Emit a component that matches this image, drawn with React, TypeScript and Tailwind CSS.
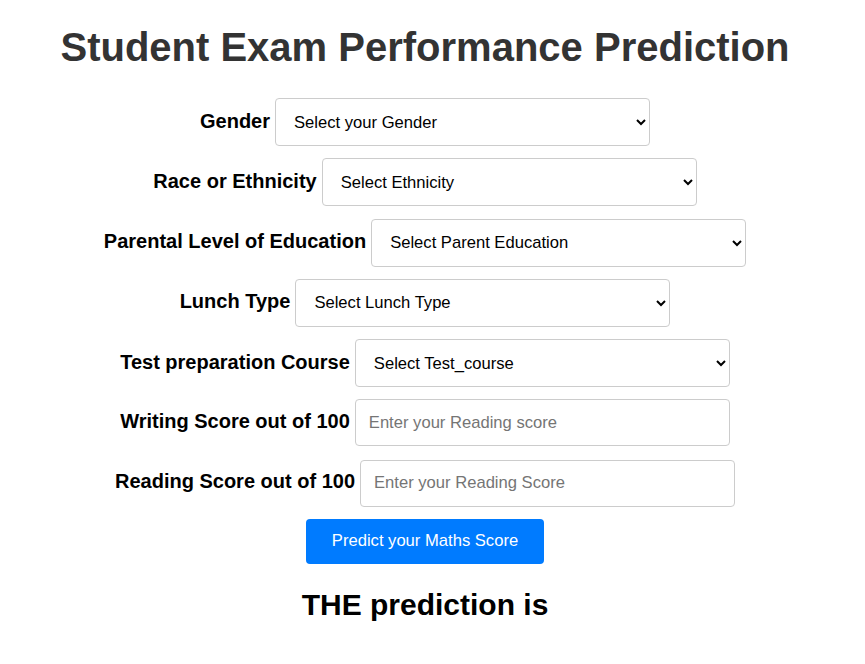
import React from "react";

const font = { fontFamily: '"Liberation Sans", Arial, sans-serif' };

function Row({ label, children }: { label: string; children: React.ReactNode }) {
  return (
    <div className="flex items-baseline justify-center gap-[5px] h-[60.3px]">
      <label className="text-[20px] font-bold text-black">{label}</label>
      {children}
    </div>
  );
}

function Sel({ text }: { text: string }) {
  return (
    <select className="w-[375px] h-[48px] border border-[#ccc] rounded-[4px] pl-[14px] pr-[6px] text-[16.6px] text-black bg-white" defaultValue="">
      <option value="" disabled>{text}</option>
    </select>
  );
}

function Inp({ text }: { text: string }) {
  return (
    <input
      className="w-[375px] h-[47px] border border-[#ccc] rounded-[4px] px-[13px] text-[16.6px] text-black bg-white placeholder:text-[#757575]"
      placeholder={text}
    />
  );
}

export default function App() {
  return (
    <div className="w-[850px] bg-white min-h-[664px]" style={font}>
      <h1 className="text-center text-[40px] font-bold text-[#333] pt-[23px] leading-[48px] mb-[27px]">
        Student Exam Performance Prediction
      </h1>
      <div className="flex flex-col">
        <Row label="Gender"><Sel text="Select your Gender" /></Row>
        <Row label="Race or Ethnicity"><Sel text="Select Ethnicity" /></Row>
        <Row label="Parental Level of Education"><Sel text="Select Parent Education" /></Row>
        <Row label="Lunch Type"><Sel text="Select Lunch Type" /></Row>
        <Row label="Test preparation Course"><Sel text="Select Test_course" /></Row>
        <Row label="Writing Score out of 100"><Inp text="Enter your Reading score" /></Row>
        <Row label="Reading Score out of 100"><Inp text="Enter your Reading Score" /></Row>
      </div>
      <div className="flex justify-center -mt-[1px]">
        <button className="w-[238px] h-[45px] bg-[#007bff] text-white text-[16.6px] rounded-[4px]">
          Predict your Maths Score
        </button>
      </div>
      <h2 className="text-center text-[30px] font-bold text-black mt-[23px] leading-[36px]">
        THE prediction is
      </h2>
    </div>
  );
}
